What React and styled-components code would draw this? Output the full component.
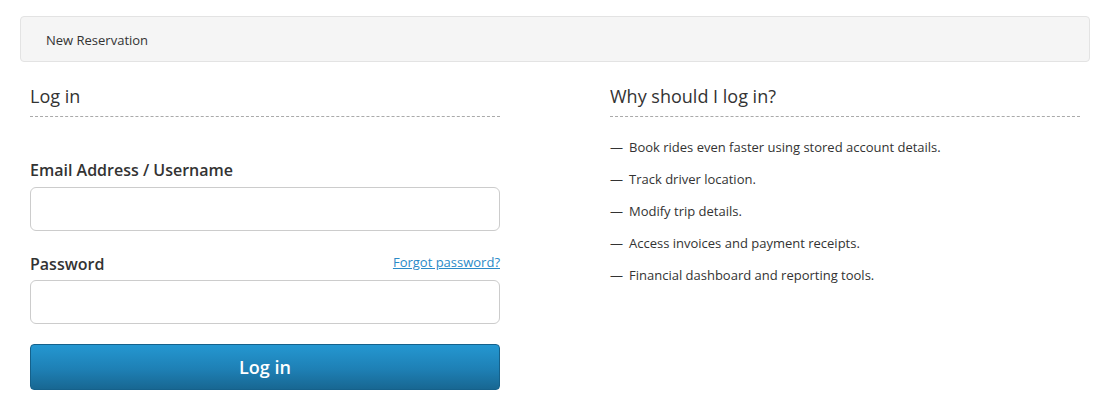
import React from 'react';
import styled, { createGlobalStyle } from 'styled-components';

const GlobalStyle = createGlobalStyle`
  body {
    margin: 0;
    background: #fff;
    font-family: "Open Sans", "Noto Sans", sans-serif;
    color: #333;
  }
`;

const Page = styled.div`
  padding: 16px 20px 0;
`;

const Breadcrumb = styled.div`
  box-sizing: border-box;
  height: 46px;
  display: flex;
  align-items: center;
  padding: 2px 25px 0;
  background: #f5f5f5;
  border: 1px solid #e3e3e3;
  border-radius: 4px;
  font-size: 13px;
  color: #333;
`;

const Columns = styled.div`
  display: grid;
  grid-template-columns: 470px 470px;
  column-gap: 110px;
  padding: 0 10px;
`;

const Heading = styled.h2`
  margin: 22px 0 0;
  padding-bottom: 8px;
  font-size: 18px;
  line-height: 24px;
  font-weight: 400;
  color: #333;
  border-bottom: 1px dashed #aaa;
`;

const Form = styled.form`
  display: flex;
  flex-direction: column;
  padding-top: 42px;
`;

const LabelRow = styled.div`
  display: flex;
  justify-content: space-between;
  align-items: flex-start;
  margin-bottom: ${(p) => p.gap || 6}px;
`;

const Label = styled.label`
  font-size: 16px;
  line-height: 22px;
  font-weight: 600;
  color: #333;
`;

const ForgotLink = styled.a`
  font-size: 13px;
  line-height: 18px;
  color: #2a8ac8;
  text-decoration: underline;
  cursor: pointer;
`;

const Input = styled.input`
  box-sizing: border-box;
  width: 100%;
  height: 44px;
  margin-bottom: ${(p) => p.spacing}px;
  border: 1px solid #ccc;
  border-radius: 6px;
  background: #fff;
  font: inherit;
  font-size: 15px;
  padding: 0 12px;
  outline: none;
`;

const SubmitButton = styled.button`
  height: 46px;
  width: 100%;
  border: 1px solid #15618b;
  border-radius: 4px;
  background: linear-gradient(to bottom, #2497d1 0%, #1e80b5 55%, #186792 100%);
  color: #fff;
  font-family: inherit;
  font-size: 18px;
  font-weight: 600;
  cursor: pointer;
`;

const Reasons = styled.ul`
  list-style: none;
  margin: 0;
  padding: 21px 0 0;
`;

const Reason = styled.li`
  font-size: 13px;
  line-height: 18px;
  margin-bottom: 14px;
  color: #333;

  &::before {
    content: "—";
    margin-right: 6px;
  }
`;

const reasons = [
  'Book rides even faster using stored account details.',
  'Track driver location.',
  'Modify trip details.',
  'Access invoices and payment receipts.',
  'Financial dashboard and reporting tools.',
];

const App = () => (
  <Page>
    <GlobalStyle />
    <Breadcrumb>New Reservation</Breadcrumb>
    <Columns>
      <div>
        <Heading>Log in</Heading>
        <Form onSubmit={(e) => e.preventDefault()}>
          <LabelRow>
            <Label htmlFor="email">Email Address / Username</Label>
          </LabelRow>
          <Input id="email" type="text" spacing={22} />
          <LabelRow gap={5}>
            <Label htmlFor="password">Password</Label>
            <ForgotLink>Forgot password?</ForgotLink>
          </LabelRow>
          <Input id="password" type="password" spacing={20} />
          <SubmitButton type="submit">Log in</SubmitButton>
        </Form>
      </div>
      <div>
        <Heading>Why should I log in?</Heading>
        <Reasons>
          {reasons.map((r) => (
            <Reason key={r}>{r}</Reason>
          ))}
        </Reasons>
      </div>
    </Columns>
  </Page>
);

export default App;
